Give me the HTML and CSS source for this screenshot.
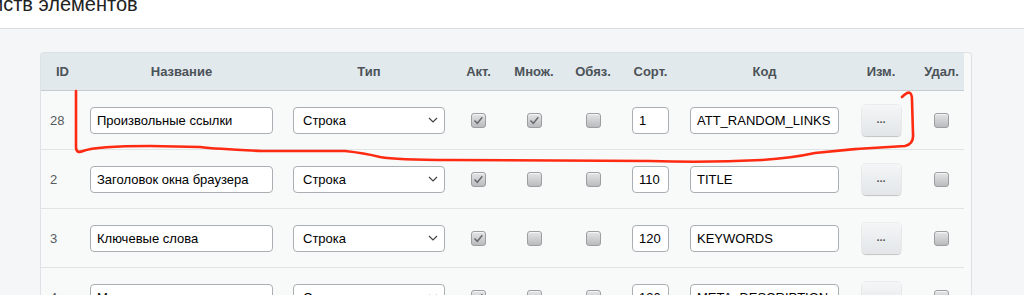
FILE: index.html
```html
<!DOCTYPE html>
<html lang="ru">
<head>
  <meta charset="UTF-8">
  <title>Настройка свойств элементов</title>
  <link rel="stylesheet" href="styles.css">
</head>
<body>

  <div class="top">
    <h1>йств элементов</h1>
  </div>

  <div class="content">
    <div class="grid-wrap">
      <table class="props">
        <colgroup>
          <col style="width:44px"><col style="width:193px"><col style="width:182px"><col style="width:37px">
          <col style="width:74px"><col style="width:44px"><col style="width:71px"><col style="width:157px">
          <col style="width:76px"><col style="width:45px">
        </colgroup>
        <thead>
          <tr>
            <th class="id">ID</th>
            <th>Название</th>
            <th>Тип</th>
            <th>Акт.</th>
            <th>Множ.</th>
            <th>Обяз.</th>
            <th>Сорт.</th>
            <th>Код</th>
            <th>Изм.</th>
            <th>Удал.</th>
          </tr>
        </thead>
        <tbody>
          <tr>
            <td class="id">28</td>
            <td><input class="txt name" type="text" value="Произвольные ссылки"></td>
            <td><select class="type"><option>Строка</option></select></td>
            <td><input class="chk" type="checkbox" checked></td>
            <td><input class="chk" type="checkbox" checked></td>
            <td><input class="chk" type="checkbox"></td>
            <td><input class="txt sort" type="text" value="1"></td>
            <td><input class="txt code" type="text" value="ATT_RANDOM_LINKS"></td>
            <td><button class="more">...</button></td>
            <td><input class="chk" type="checkbox"></td>
          </tr>
          <tr>
            <td class="id">2</td>
            <td><input class="txt name" type="text" value="Заголовок окна браузера"></td>
            <td><select class="type"><option>Строка</option></select></td>
            <td><input class="chk" type="checkbox" checked></td>
            <td><input class="chk" type="checkbox"></td>
            <td><input class="chk" type="checkbox"></td>
            <td><input class="txt sort" type="text" value="110"></td>
            <td><input class="txt code" type="text" value="TITLE"></td>
            <td><button class="more">...</button></td>
            <td><input class="chk" type="checkbox"></td>
          </tr>
          <tr>
            <td class="id">3</td>
            <td><input class="txt name" type="text" value="Ключевые слова"></td>
            <td><select class="type"><option>Строка</option></select></td>
            <td><input class="chk" type="checkbox" checked></td>
            <td><input class="chk" type="checkbox"></td>
            <td><input class="chk" type="checkbox"></td>
            <td><input class="txt sort" type="text" value="120"></td>
            <td><input class="txt code" type="text" value="KEYWORDS"></td>
            <td><button class="more">...</button></td>
            <td><input class="chk" type="checkbox"></td>
          </tr>
          <tr>
            <td class="id">4</td>
            <td><input class="txt name" type="text" value="Мета-описание"></td>
            <td><select class="type"><option>Строка</option></select></td>
            <td><input class="chk" type="checkbox" checked></td>
            <td><input class="chk" type="checkbox"></td>
            <td><input class="chk" type="checkbox"></td>
            <td><input class="txt sort" type="text" value="130"></td>
            <td><input class="txt code" type="text" value="META_DESCRIPTION"></td>
            <td><button class="more">...</button></td>
            <td><input class="chk" type="checkbox"></td>
          </tr>
        </tbody>
      </table>
    </div>
  </div>

  <!-- пометка от руки поверх первой строки -->
  <svg class="mark" width="1024" height="295" viewBox="0 0 1024 295">
    <path d="M76 91 L76 147 Q76 154 83 151 Q96 146 150 146 L200 147 Q216 149 262 151 L345 151 Q364 153 380 157 Q396 160 450 160 L650 161 Q705 163 762 160 Q792 158 815 153 Q860 148 905 146 Q914 144 913 134 L912 100 Q912 87 902 97"
          fill="none" stroke="#ff2a12" stroke-width="2.6" stroke-linecap="round" stroke-linejoin="round"/>
  </svg>

</body>
</html>
```

FILE: styles.css
```css
body {
  margin: 0;
  font-family: "Liberation Sans", Arial, sans-serif;
  background-color: #f4f6f7;
  color: #222;
  position: relative;
  overflow: hidden;
}
.top {
  height: 28px;
  background-color: #fff;
  border-bottom: 1px solid #d9dee1;
  overflow: hidden;
}
.top h1 {
  margin: -6px 0 0 0;
  font-size: 20px;
  line-height: 20px;
  font-weight: normal;
  color: #222;
  text-indent: -8px;
}
.content {
  padding: 23px 0 0 40px;
}
.grid-wrap {
  width: 930px;
  background-color: #f8f9f9;
  border: 1px solid #dce2e5;
  border-bottom: none;
  border-radius: 4px 4px 0 0;
  overflow: hidden;
}
.props {
  border-collapse: collapse;
  table-layout: fixed;
  width: 923px;
}
.props th {
  height: 37px;
  background-color: #e2e9ec;
  border-bottom: 1px solid #c6cdd0;
  font-size: 13px;
  font-weight: bold;
  color: #4b5258;
  text-align: center;
  padding: 0;
}
.props th.id {
  text-align: left;
  padding-left: 15px;
}
.props td {
  height: 58px;
  border-bottom: 1px solid #dfe4e6;
  text-align: center;
  vertical-align: middle;
  padding: 0;
  font-size: 13px;
}
.props td.id {
  text-align: left;
  padding-left: 9px;
  color: #555b60;
}
.txt {
  box-sizing: border-box;
  height: 27px;
  border: 1px solid #a9afb3;
  border-radius: 4px;
  background-color: #fff;
  font-family: "Liberation Sans", Arial, sans-serif;
  font-size: 13px;
  color: #000;
  padding: 0 6px;
  margin: 0;
  vertical-align: middle;
}
.name { width: 183px; }
.sort { width: 37px; }
.code { width: 149px; }
.type {
  box-sizing: border-box;
  width: 152px;
  height: 27px;
  border: 1px solid #a9afb3;
  border-radius: 4px;
  font-family: "Liberation Sans", Arial, sans-serif;
  font-size: 13px;
  color: #000;
  padding: 0 9px;
  margin: 0;
  appearance: none;
  -webkit-appearance: none;
  background: #fff url("data:image/svg+xml,%3Csvg xmlns='http://www.w3.org/2000/svg' width='10' height='6'%3E%3Cpath d='M1 1l4 4 4-4' fill='none' stroke='%23444' stroke-width='1.2'/%3E%3C/svg%3E") no-repeat right 6px center;
  vertical-align: middle;
}
.chk {
  appearance: none;
  -webkit-appearance: none;
  box-sizing: border-box;
  width: 15px;
  height: 15px;
  margin: 0;
  border: 1px solid #9c9fa2;
  border-radius: 3px;
  background: linear-gradient(#e4e5e6, #b9bbbd);
  box-shadow: inset 0 1px 0 rgba(255, 255, 255, 0.6);
  vertical-align: middle;
}
.chk:checked {
  background:
    url("data:image/svg+xml,%3Csvg xmlns='http://www.w3.org/2000/svg' width='13' height='13'%3E%3Cpath d='M2.5 6.5l2.8 2.8 5-6' fill='none' stroke='%23686c70' stroke-width='1.5'/%3E%3C/svg%3E") no-repeat center,
    linear-gradient(#e4e5e6, #b9bbbd);
}
.more {
  box-sizing: border-box;
  width: 39px;
  height: 31px;
  border: none;
  border-radius: 4px;
  background: linear-gradient(#f4f6f7, #e2e6e8);
  box-shadow: 0 1px 1px rgba(0, 0, 0, 0.18), 0 0 0 1px rgba(0, 0, 0, 0.05);
  font-family: "Liberation Sans", Arial, sans-serif;
  font-size: 11px;
  font-weight: bold;
  color: #555;
  padding: 0 0 2px 0;
  vertical-align: middle;
}
.mark {
  position: absolute;
  left: 0;
  top: 0;
  pointer-events: none;
}
```
